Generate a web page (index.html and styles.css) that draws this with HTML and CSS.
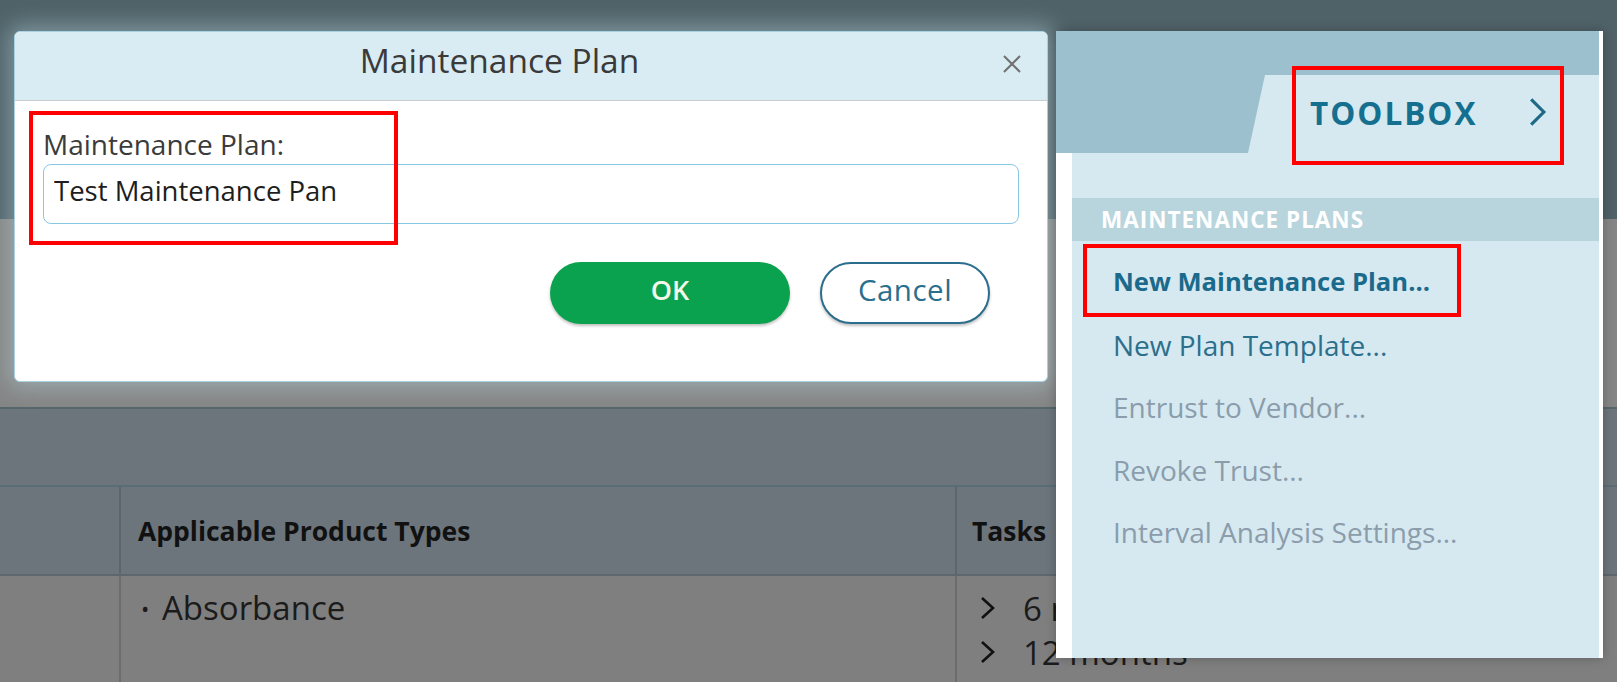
FILE: index.html
```html
<!DOCTYPE html>
<html lang="en">
<head>
<meta charset="utf-8">
<title>Maintenance Plan</title>
<link rel="stylesheet" href="styles.css">
</head>
<body>
<div class="page">
  <div class="top"></div>
  <div class="gap"></div>
  <div class="band"></div>
  <div class="table">
    <div class="row thead">
      <div class="c c1"></div>
      <div class="c c2">Applicable Product Types</div>
      <div class="c c3">Tasks</div>
    </div>
    <div class="row tbody">
      <div class="c c1"></div>
      <div class="c c2"><div class="li"><span class="dot">•</span><span>Absorbance</span></div></div>
      <div class="c c3">
        <div class="task"><svg class="tchev" viewBox="0 0 16 24"><polyline points="2,2 13,12 2,22"/></svg><span>6 months</span></div>
        <div class="task"><svg class="tchev" viewBox="0 0 16 24"><polyline points="2,2 13,12 2,22"/></svg><span>12 months</span></div>
      </div>
    </div>
  </div>

  <div class="dialog">
    <div class="dlg-head">
      <div class="dlg-title">Maintenance Plan</div>
      <svg class="close" viewBox="0 0 20 20"><line x1="2" y1="2" x2="18" y2="18"/><line x1="18" y1="2" x2="2" y2="18"/></svg>
    </div>
    <div class="dlg-body">
      <div class="label">Maintenance Plan:</div>
      <input class="field" type="text" value="Test Maintenance Pan">
      <div class="actions">
        <button class="btn ok">OK</button>
        <button class="btn cancel">Cancel</button>
      </div>
    </div>
    <div class="mark mark-dlg"></div>
  </div>

  <div class="toolbox">
    <div class="tb-head">
      <div class="tab">
        <span class="tb-title">TOOLBOX</span>
        <svg class="tb-chev" viewBox="0 0 18 28"><polyline points="3,2 15,14 3,26"/></svg>
      </div>
    </div>
    <div class="tb-body">
      <div class="section">MAINTENANCE PLANS</div>
      <div class="items">
        <div class="item primary">New Maintenance Plan...</div>
        <div class="item">New Plan Template...</div>
        <div class="item disabled">Entrust to Vendor...</div>
        <div class="item disabled">Revoke Trust...</div>
        <div class="item disabled">Interval Analysis Settings...</div>
      </div>
    </div>
    <div class="mark mark-tb"></div>
    <div class="mark mark-item"></div>
  </div>
</div>
</body>
</html>
```
FILE: styles.css
```css
* { box-sizing: border-box; }
html, body { margin: 0; padding: 0; }
body {
  width: 1617px;
  height: 682px;
  overflow: hidden;
  font-family: "Open Sans", "Noto Sans", sans-serif;
  background: #7f7f7f;
}
.page {
  position: relative;
  width: 1617px;
  height: 682px;
  overflow: hidden;
}
.top { height: 219px; background: #4f6268; }
.gap { height: 188px; background: #858585; }
.band { height: 78px; background: #6c757c; border-top: 2px solid #55666c; }
.table { background: #7f7f7f; }
.row {
  display: grid;
  grid-template-columns: 119px 836px 1fr;
}
.thead {
  height: 91px;
  background: #6c757c;
  border-top: 2px solid #5a6d75;
  border-bottom: 2px solid #5e676d;
  align-items: center;
  font-weight: 700;
  font-size: 26.5px;
  color: #111;
}
.thead .c { height: 100%; display: flex; align-items: center; }
.c2, .c3 { border-left: 2px solid #5f666b; }
.tbody .c2, .tbody .c3 { border-left-color: #6c6c6c; }
.c2 { padding-left: 17px; }
.c3 { padding-left: 15px; }
.tbody { height: 120px; }
.tbody .c { padding-top: 10px; }
.li { display: flex; align-items: center; font-size: 33px; line-height: 44px; color: #1b1b1b; }
.dot { width: 24px; font-size: 22px; padding-left: 3px; }
.task { display: flex; align-items: center; height: 44px; font-size: 33px; color: #1b1b1b; }
.tchev { width: 16px; height: 24px; margin-left: 8px; margin-right: 27px; fill: none; stroke: #111; stroke-width: 2.6; }

/* dialog */
.dialog {
  position: absolute;
  left: 14px;
  top: 31px;
  width: 1034px;
  height: 351px;
  background: #fff;
  border: 1px solid #a9d3e3;
  border-radius: 6px;
  box-shadow: 0 0 22px 6px rgba(185, 212, 222, 0.45);
}
.dlg-head {
  height: 69px;
  background: #d9ebf3;
  border-bottom: 1px solid #c8cdd0;
  border-radius: 5px 5px 0 0;
  display: flex;
  align-items: center;
}
.dlg-title {
  flex: 1;
  text-align: center;
  margin-right: 18px;
  padding-bottom: 12px;
  font-size: 33.5px;
  line-height: 44px;
  color: #3a3a3a;
}
.close { width: 20px; height: 20px; margin-right: 25px; margin-bottom: 4px; stroke: #707070; stroke-width: 2; }
.dlg-body { padding: 25px 28px 0 28px; }
.label { font-size: 28px; line-height: 36px; color: #3b3b3b; }
.field {
  display: block;
  width: 100%;
  height: 60px;
  margin-top: 2px;
  border: 1.5px solid #86c8e2;
  border-radius: 8px;
  padding: 0 10px 7px 10px;
  font-family: "Open Sans", "Noto Sans", sans-serif;
  font-size: 27.5px;
  color: #1e1e1e;
  outline: none;
  background: #fff;
}
.actions {
  display: flex;
  justify-content: flex-end;
  gap: 30px;
  margin-top: 38px;
  margin-right: 29px;
}
.btn {
  height: 62px;
  border-radius: 31px;
  padding: 0 0 7px 0;
  font-family: "Open Sans", "Noto Sans", sans-serif;
  font-size: 27px;
  box-shadow: 0 2px 3px rgba(0, 0, 0, 0.25);
  cursor: pointer;
}
.ok {
  width: 240px;
  background: #0ba24f;
  border: none;
  color: #f2f8ea;
  font-weight: 600;
}
.cancel {
  width: 170px;
  background: #fff;
  border: 2px solid #2a6d8c;
  color: #2b6f8e;
  font-size: 29.5px;
  letter-spacing: 0.5px;
}

/* annotations */
.mark { position: absolute; border: 4px solid #ff0000; pointer-events: none; }
.mark-dlg { left: 14px; top: 79px; width: 369px; height: 134px; }
.mark-tb { left: 236px; top: 35px; width: 272px; height: 99px; }
.mark-item { left: 27px; top: 213px; width: 378px; height: 73px; }

/* toolbox */
.toolbox {
  position: absolute;
  left: 1056px;
  top: 31px;
  width: 547px;
  height: 627px;
  background: #fff;
  padding-right: 4px;
  display: flex;
  flex-direction: column;
  box-shadow: 0 0 10px rgba(0, 0, 0, 0.25);
}
.tb-head {
  height: 122px;
  background: #9dc0cf;
  display: flex;
  justify-content: flex-end;
  align-items: flex-end;
}
.tab {
  width: 351px;
  height: 78px;
  background: #d6e9f1;
  clip-path: polygon(17px 0, 100% 0, 100% 100%, 0 100%);
  display: flex;
  align-items: center;
  justify-content: space-between;
  padding-left: 62px;
  padding-right: 52px;
  padding-bottom: 4px;
}
.tb-title {
  font-size: 31.5px;
  font-weight: 700;
  letter-spacing: 2px;
  color: #15708f;
}
.tb-chev { width: 19px; height: 30px; fill: none; stroke: #1e6a86; stroke-width: 3; }
.tb-body {
  flex: 1;
  margin-left: 16px;
  background: #d6e9f1;
  padding-top: 45px;
}
.section {
  height: 43px;
  background: #b8d5dd;
  color: #fff;
  font-weight: 700;
  font-size: 22.5px;
  letter-spacing: 1px;
  padding-left: 29px;
  display: flex;
  align-items: center;
}
.items { padding-top: 10px; padding-left: 41px; }
.item {
  height: 62.6px;
  line-height: 62px;
  font-size: 28px;
  color: #2c6f8c;
}
.item.primary { font-weight: 700; color: #1b6a8b; font-size: 25.6px; }
.item.disabled { color: #8b9cab; }
```
